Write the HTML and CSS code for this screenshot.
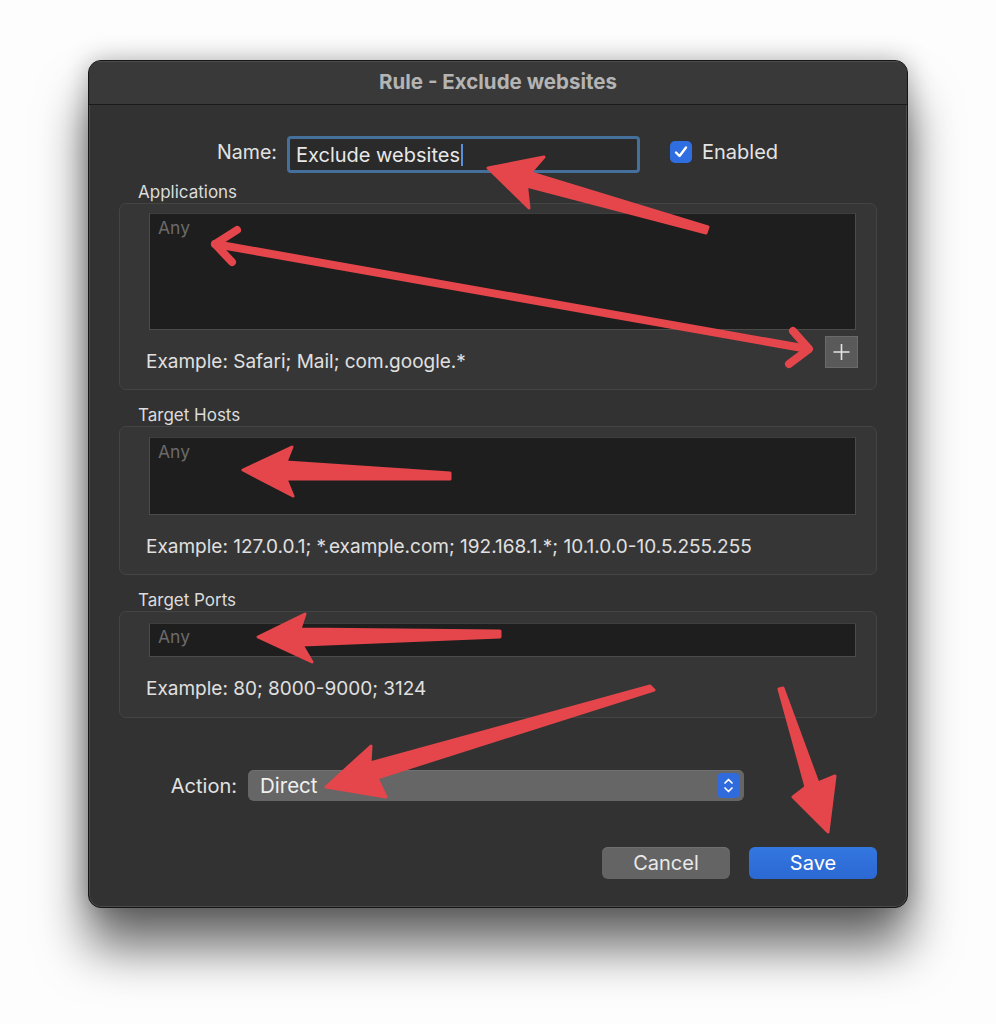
FILE: index.html
```html
<!DOCTYPE html>
<html lang="en">
<head>
<meta charset="utf-8">
<title>Rule - Exclude websites</title>
<link rel="stylesheet" href="styles.css">
</head>
<body>
<div class="page">
  <div class="window">
    <div class="titlebar">Rule - Exclude websites</div>
    <div class="content">
      <div class="name-row">
        <div class="row-label name-label">Name:</div>
        <div class="name-input"><span class="name-value">Exclude websites</span><span class="caret"></span></div>
        <label class="enabled">
          <span class="checkbox">
            <svg viewBox="0 0 22 22" width="22" height="22"><path d="M6 11.5 L9.5 15 L16 6.5" fill="none" stroke="#fff" stroke-width="2.4" stroke-linecap="round" stroke-linejoin="round"/></svg>
          </span>
          <span class="enabled-text">Enabled</span>
        </label>
      </div>

      <div class="section-label first">Applications</div>
      <div class="group group-apps">
        <div class="field field-apps"><span class="placeholder">Any</span></div>
        <div class="group-foot">
          <div class="example">Example: Safari; Mail; com.google.*</div>
          <div class="plus-btn">
            <svg viewBox="0 0 33 32" width="33" height="32"><path d="M16.5 8 V24 M8.5 16 H24.5" stroke="#e4e4e4" stroke-width="1.6"/></svg>
          </div>
        </div>
      </div>

      <div class="section-label">Target Hosts</div>
      <div class="group group-hosts">
        <div class="field field-hosts"><span class="placeholder">Any</span></div>
        <div class="example example-gap">Example: 127.0.0.1; *.example.com; 192.168.1.*; 10.1.0.0-10.5.255.255</div>
      </div>

      <div class="section-label">Target Ports</div>
      <div class="group group-ports">
        <div class="field field-ports"><span class="placeholder">Any</span></div>
        <div class="example example-gap">Example: 80; 8000-9000; 3124</div>
      </div>

      <div class="action-row">
        <div class="row-label action-label">Action:</div>
        <div class="popup">
          <span class="popup-value">Direct</span>
          <span class="stepper">
            <svg viewBox="0 0 23 25" width="23" height="25"><path d="M8 10 L11.5 6.5 L15 10 M8 15 L11.5 18.5 L15 15" fill="none" stroke="#fff" stroke-width="1.7" stroke-linecap="round" stroke-linejoin="round"/></svg>
          </span>
        </div>
      </div>

      <div class="buttons">
        <div class="btn btn-cancel">Cancel</div>
        <div class="btn btn-save">Save</div>
      </div>
    </div>
  </div>

  <svg class="annotations" viewBox="0 0 996 1024" width="996" height="1024">
    <g fill="#e5464b" stroke="#e5464b" stroke-width="3" stroke-linejoin="round">
      <polygon points="488,168 544,157 530.3,172.7 708,227 706,233 526.5,186 529,208"/>
      <polygon points="243,470 292,447 286,462 450,473 450,479 286,479 293,496"/>
      <polygon points="258,637 305,614 300,629 500,631 500,637 302,645 312,662"/>
      <polygon points="326,787 371,746 370,763 650,686 654,690 377,778 386,797"/>
      <polygon points="828,832 793,797 806,787 779,689 783,688 818,783 835,776"/>
    </g>
    <g fill="none" stroke="#e5464b" stroke-width="8" stroke-linecap="round" stroke-linejoin="round">
      <path d="M215 244 L808 349"/>
      <path d="M237 230 L215 244 L232 262"/>
      <path d="M793 331 L809 349 L789 364"/>
    </g>
  </svg>
</div>
</body>
</html>
```

FILE: styles.css
```css
html, body {
  margin: 0;
  padding: 0;
  background: #fdfdfd;
}

.page {
  position: relative;
  width: 996px;
  height: 1024px;
  overflow: hidden;
  font-family: "Inter", "Liberation Sans", sans-serif;
  color: #dedede;
}

.window {
  margin: 60px 0 0 88px;
  width: 820px;
  height: 848px;
  box-sizing: border-box;
  background: #323232;
  border: 1px solid #151515;
  border-radius: 13px;
  box-shadow: inset 0 0 0 1px #4a4a4a, 0 40px 50px rgba(0, 0, 0, 0.58), 0 0 26px rgba(0, 0, 0, 0.28);
  overflow: hidden;
}

.titlebar {
  height: 43px;
  line-height: 41px;
  text-align: center;
  background: #393939;
  border-bottom: 1px solid #1b1b1b;
  font-weight: 700;
  font-size: 20.5px;
  color: #b4b4b4;
  box-shadow: inset 0 1px 0 #4c4c4c;
}

.content {
  padding: 31px 30px 0 30px;
  display: flex;
  flex-direction: column;
}

.name-row {
  display: flex;
  align-items: center;
  height: 37px;
}

.row-label {
  text-align: right;
  font-size: 19.6px;
  color: #e2e2e2;
}

.name-label {
  width: 158px;
  margin-top: -6px;
}

.name-input {
  margin-left: 10px;
  width: 353px;
  height: 37px;
  box-sizing: border-box;
  border: 3px solid #46709c;
  border-radius: 4px;
  background: #2a2a2a;
  display: flex;
  align-items: center;
  padding-left: 6px;
}

.name-value {
  font-size: 20px;
  color: #e8e8e8;
}

.caret {
  width: 2px;
  height: 22px;
  background: #5b8fd9;
  margin-left: 1px;
}

.enabled {
  margin-left: 30px;
  display: flex;
  align-items: center;
  margin-top: -6px;
}

.checkbox {
  width: 22px;
  height: 22px;
  border-radius: 5px;
  background: #2f6ee0;
  display: block;
}

.checkbox svg {
  display: block;
}

.enabled-text {
  margin-left: 10px;
  font-size: 20px;
  color: #e4e4e4;
}

.section-label {
  height: 22px;
  line-height: 22px;
  font-size: 17px;
  color: #dcdcdc;
  padding-left: 19px;
  margin-top: 14px;
}

.section-label.first {
  margin-top: 8px;
}

.group {
  box-sizing: border-box;
  border: 1px solid #444444;
  border-radius: 7px;
  background: #363636;
  padding: 9px 20px 0 29px;
}

.group-apps {
  height: 187px;
}

.group-hosts {
  height: 149px;
  padding-top: 10px;
}

.group-ports {
  height: 107px;
  padding-top: 11px;
}

.field {
  box-sizing: border-box;
  background: #1e1e1e;
  border: 1px solid #4b4b4b;
  border-top-color: #3e3e3e;
  padding: 3px 0 0 8px;
}

.field-apps {
  height: 117px;
}

.field-hosts {
  height: 78px;
}

.field-ports {
  height: 34px;
  padding-top: 2px;
}

.placeholder {
  font-size: 17.5px;
  color: #6a6a6a;
  line-height: 22px;
}

.group-foot {
  display: flex;
  justify-content: space-between;
  align-items: flex-start;
  margin-top: 6px;
}

.example {
  font-size: 19px;
  line-height: 20px;
  color: #e0e0e0;
  margin-left: -3px;
}

.group-foot .example {
  margin-top: 16px;
}

.example-gap {
  margin-top: 22px;
}

.plus-btn {
  width: 33px;
  height: 32px;
  box-sizing: border-box;
  background: #5a5a5a;
  border: 1px solid #6a6a6a;
  margin-right: -2px;
}

.plus-btn svg {
  display: block;
  margin: -1px;
}

.action-row {
  display: flex;
  align-items: center;
  margin-top: 52px;
  height: 31px;
}

.action-label {
  width: 118px;
  font-size: 20px;
}

.popup {
  margin-left: 11px;
  width: 496px;
  height: 31px;
  box-sizing: border-box;
  background: #666666;
  border-radius: 6px;
  display: flex;
  align-items: center;
  justify-content: space-between;
  padding: 0 4px 0 12px;
  box-shadow: inset 0 1px 0 #707070;
}

.popup-value {
  font-size: 20.5px;
  color: #f0f0f0;
}

.stepper {
  width: 23px;
  height: 25px;
  border-radius: 5px;
  background: #2f6bdc;
  display: block;
}

.stepper svg {
  display: block;
}

.buttons {
  display: flex;
  justify-content: flex-end;
  gap: 19px;
  margin-top: 46px;
}

.btn {
  width: 128px;
  height: 32px;
  line-height: 32px;
  border-radius: 6px;
  text-align: center;
  font-size: 20px;
}

.btn-cancel {
  background: #646464;
  color: #e9e9e9;
  box-shadow: inset 0 1px 0 #6f6f6f;
}

.btn-save {
  background: linear-gradient(#3477e0, #2b68d3);
  color: #ffffff;
}

.annotations {
  position: absolute;
  left: 0;
  top: 0;
  pointer-events: none;
}
```
